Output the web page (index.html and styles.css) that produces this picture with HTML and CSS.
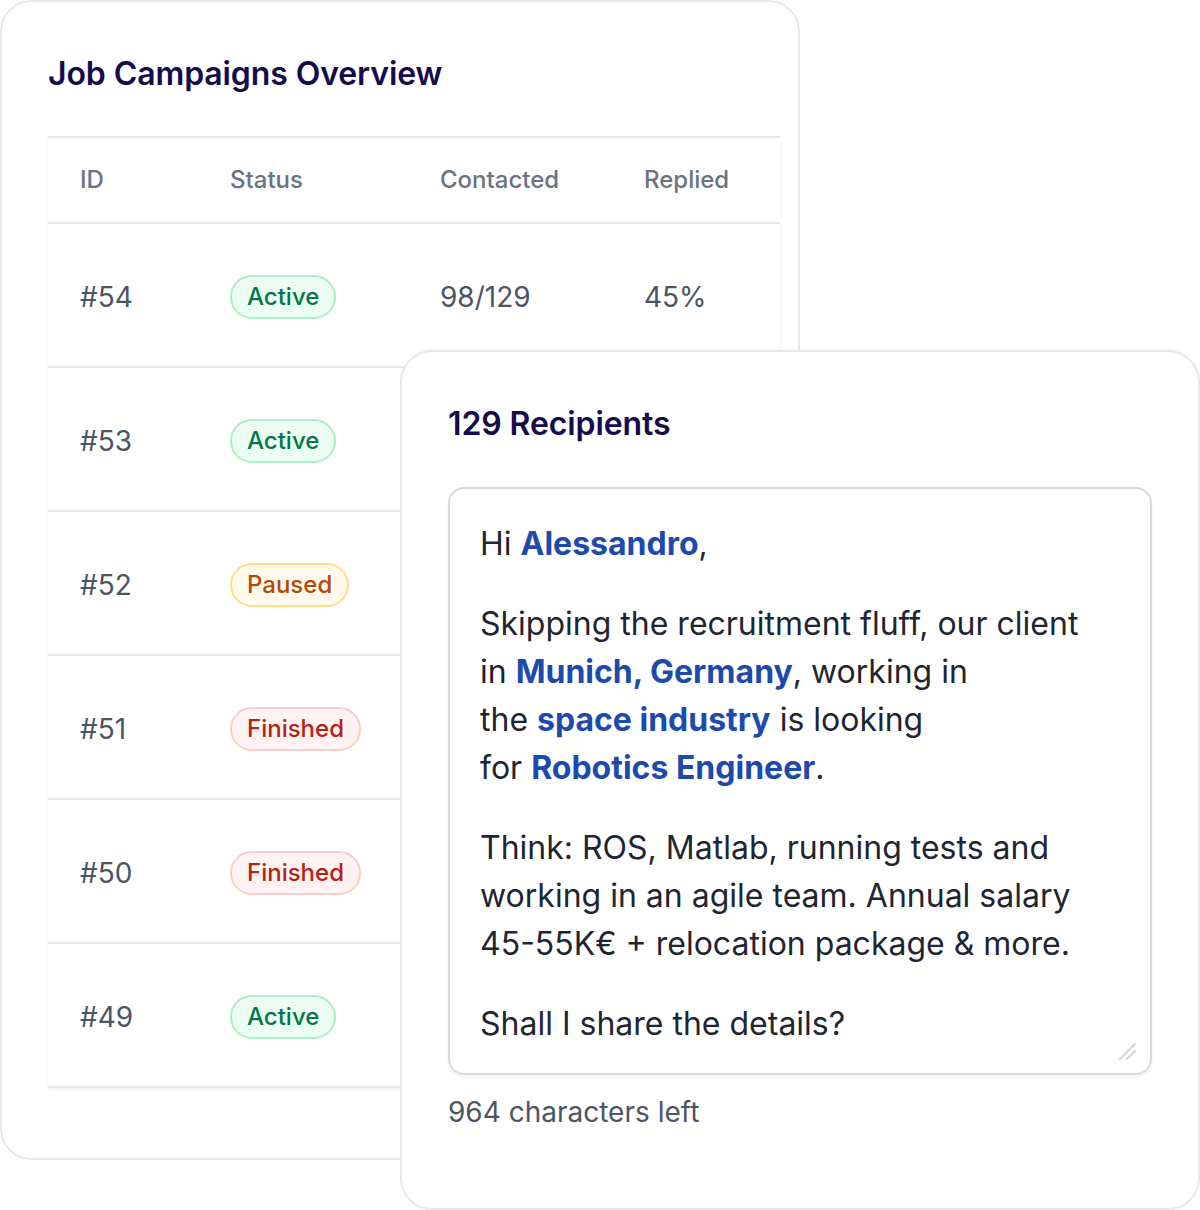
FILE: index.html
```html
<!DOCTYPE html>
<html lang="en">
<head>
<meta charset="utf-8">
<title>Job Campaigns</title>
<link rel="stylesheet" href="styles.css">
</head>
<body>
<div class="stage">
  <section class="card campaigns">
    <h2 class="card-title">Job Campaigns Overview</h2>
    <div class="table-wrap">
      <table class="table">
        <thead>
          <tr><th class="c-id">ID</th><th class="c-status">Status</th><th class="c-contacted">Contacted</th><th class="c-replied">Replied</th></tr>
        </thead>
        <tbody>
          <tr><td>#54</td><td><span class="badge active">Active</span></td><td>98/129</td><td>45%</td></tr>
          <tr><td>#53</td><td><span class="badge active">Active</span></td><td></td><td></td></tr>
          <tr><td>#52</td><td><span class="badge paused">Paused</span></td><td></td><td></td></tr>
          <tr><td>#51</td><td><span class="badge finished">Finished</span></td><td></td><td></td></tr>
          <tr><td>#50</td><td><span class="badge finished">Finished</span></td><td></td><td></td></tr>
          <tr><td>#49</td><td><span class="badge active">Active</span></td><td></td><td></td></tr>
        </tbody>
      </table>
    </div>
  </section>

  <section class="card recipients">
    <h2 class="card-title">129 Recipients</h2>
    <div class="message">
      <p>Hi <b>Alessandro</b>,</p>
      <p>Skipping the recruitment fluff, our client<br>in <b>Munich, Germany</b>, working in<br>the <b>space industry</b> is looking<br>for <b>Robotics Engineer</b>.</p>
      <p>Think: ROS, Matlab, running tests and<br>working in an agile team. Annual salary<br>45-55K€ + relocation package &amp; more.</p>
      <p>Shall I share the details?</p>
      <svg class="resize" width="20" height="20" viewBox="0 0 20 20" aria-hidden="true">
        <path d="M2 18 L17 3 M9 18 L17 10" stroke="#d1d5db" stroke-width="2" stroke-linecap="round" fill="none"/>
      </svg>
    </div>
    <div class="counter">964 characters left</div>
  </section>
</div>
</body>
</html>
```

FILE: styles.css
```css
* { box-sizing: border-box; }
html, body { margin: 0; padding: 0; background: #ffffff; }
body {
  font-family: Inter, "Noto Sans", "Liberation Sans", sans-serif;
  width: 1200px;
  height: 1210px;
  overflow: hidden;
}
.stage {
  position: relative;
  width: 1200px;
  height: 1210px;
}
.card {
  background: #ffffff;
  border: 2px solid #e8e8ea;
  border-radius: 32px;
}
.card-title {
  margin: 0;
  font-size: 32px;
  line-height: 48px;
  font-weight: 600;
  color: #150b4d;
  letter-spacing: -0.1px;
}
.campaigns {
  width: 800px;
  height: 1160px;
  padding: 48px 0 0 46px;
  overflow: hidden;
}
.table-wrap {
  margin-top: 38px;
  width: 732px;
  box-shadow: 0 2px 4px rgba(0,0,0,0.06);
}
.table {
  width: 732px;
  border-collapse: collapse;
  table-layout: fixed;
  background: #fff;
}
.table th, .table td {
  text-align: left;
  padding: 0 0 0 32px;
  border-top: 2px solid #e8e8ea;
}
.table th {
  height: 86px;
  font-size: 24px;
  font-weight: 500;
  color: #6b7280;
  padding-bottom: 2px;
}
.table td {
  height: 144px;
  font-size: 28px;
  font-weight: 400;
  color: #4b5563;
  padding-top: 3px;
}
.table tbody tr:last-child td { border-bottom: 2px solid #e8e8ea; }
.c-id { width: 150px; }
.c-status { width: 210px; }
.c-contacted { width: 204px; }
.c-replied { width: 168px; }
.badge {
  display: inline-block;
  height: 44px;
  line-height: 40px;
  padding: 0 15px;
  border-radius: 22px;
  border: 2px solid;
  font-size: 24px;
  font-weight: 500;
}
.badge.active { background: #ecfdf3; border-color: #abefc6; color: #067647; }
.badge.paused { background: #fffaeb; border-color: #fedf89; color: #b54708; }
.badge.finished { background: #fef3f2; border-color: #fecdca; color: #b42318; }

.recipients {
  position: absolute;
  left: 400px;
  top: 350px;
  width: 800px;
  height: 860px;
  padding: 48px 46px 0 46px;
}
.message {
  position: relative;
  margin-top: 39px;
  height: 588px;
  border: 2px solid #d9d9de;
  border-radius: 16px;
  padding: 31px 30px 0 30px;
  box-shadow: 0 2px 3px rgba(0,0,0,0.05);
  font-size: 32px;
  line-height: 48px;
  color: #1f2531;
}
.message p { margin: 0 0 32px 0; }
.message b { font-weight: 700; color: #1d4aad; }
.resize {
  position: absolute;
  right: 12px;
  bottom: 12px;
}
.counter {
  margin-top: 17px;
  font-size: 28px;
  line-height: 40px;
  color: #4b5563;
}
```
